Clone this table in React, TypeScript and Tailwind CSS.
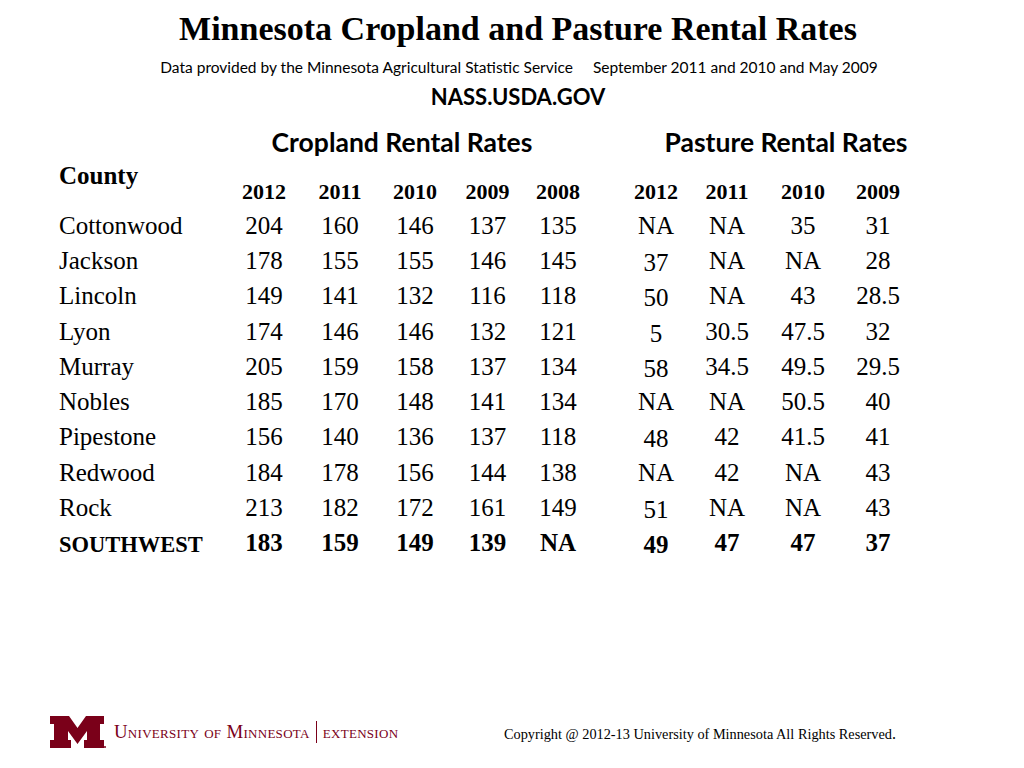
const serif = "font-['Liberation_Serif','Times_New_Roman',serif]";
const sans = "font-['Lato','Open_Sans',sans-serif]";

type Row = { name: string; crop: string[]; pasture: string[]; total?: boolean };

const rows: Row[] = [
  { name: "Cottonwood", crop: ["204", "160", "146", "137", "135"], pasture: ["NA", "NA", "35", "31"] },
  { name: "Jackson", crop: ["178", "155", "155", "146", "145"], pasture: ["37", "NA", "NA", "28"] },
  { name: "Lincoln", crop: ["149", "141", "132", "116", "118"], pasture: ["50", "NA", "43", "28.5"] },
  { name: "Lyon", crop: ["174", "146", "146", "132", "121"], pasture: ["5", "30.5", "47.5", "32"] },
  { name: "Murray", crop: ["205", "159", "158", "137", "134"], pasture: ["58", "34.5", "49.5", "29.5"] },
  { name: "Nobles", crop: ["185", "170", "148", "141", "134"], pasture: ["NA", "NA", "50.5", "40"] },
  { name: "Pipestone", crop: ["156", "140", "136", "137", "118"], pasture: ["48", "42", "41.5", "41"] },
  { name: "Redwood", crop: ["184", "178", "156", "144", "138"], pasture: ["NA", "42", "NA", "43"] },
  { name: "Rock", crop: ["213", "182", "172", "161", "149"], pasture: ["51", "NA", "NA", "43"] },
  { name: "SOUTHWEST", crop: ["183", "159", "149", "139", "NA"], pasture: ["49", "47", "47", "37"], total: true },
];

const grid =
  "grid grid-cols-[167px_76px_76px_74px_71px_70px_27px_72px_70px_82px_68px]";

function BlockM() {
  return (
    <svg width="56" height="32" viewBox="0 0 56 32" className="shrink-0">
      <path
        d="M0 0H19L27.5 12L36 0H54V8H50V24H54V32H34V24H37V15L27.5 28L18 15V24H21V32H0V24H4V8H0Z"
        fill="#7a0019"
      />
      <circle cx="55" cy="31" r="1" fill="#7a0019" />
    </svg>
  );
}

export default function App() {
  return (
    <div className="w-[1024px] h-[768px] bg-white text-black flex flex-col overflow-hidden">
      <h1 className={`${serif} text-[34px] font-bold leading-[42px] mt-[8px] text-center pl-[12px]`}>
        Minnesota Cropland and Pasture Rental Rates
      </h1>
      <p className={`${sans} text-[15.5px] leading-[20px] mt-[7px] text-center pl-[14px]`}>
        Data provided by the Minnesota Agricultural Statistic Service
        <span className="inline-block w-[20px]" />
        September 2011 and 2010 and May 2009
      </p>
      <p className={`${sans} text-[22px] font-bold leading-[26px] mt-[7px] text-center pl-[12px]`}>
        NASS.USDA.GOV
      </p>

      <div className="pl-[59px] mt-[16px]">
        <div className={`${grid} ${sans} text-[26.5px] font-bold leading-[32px]`}>
          <div />
          <div className="col-span-5 text-center pr-[15px]">Cropland Rental Rates</div>
          <div />
          <div className="col-span-4 text-center pl-[40px]">Pasture Rental Rates</div>
        </div>

        <div className={`${grid} ${serif} font-bold h-[50px]`}>
          <div className="text-[25px] leading-[30px] mt-[3px]">County</div>
          {["2012", "2011", "2010", "2009", "2008"].map((y) => (
            <div key={"c" + y} className="text-[22px] leading-[32px] self-end text-center">
              {y}
            </div>
          ))}
          <div />
          {["2012", "2011", "2010", "2009"].map((y) => (
            <div key={"p" + y} className="text-[22px] leading-[32px] self-end text-center">
              {y}
            </div>
          ))}
        </div>

        {rows.map((r) => (
          <div
            key={r.name}
            className={`${grid} ${serif} h-[35.3px] items-center text-[25px] leading-[30px] ${
              r.total ? "font-bold" : ""
            }`}
          >
            <div className={r.total ? "text-[22.5px] pt-[4px]" : ""}>{r.name}</div>
            {r.crop.map((v, i) => (
              <div key={"c" + i} className="text-center">
                {v}
              </div>
            ))}
            <div />
            {r.pasture.map((v, i) => (
              <div
                key={"p" + i}
                className={`text-center ${i === 0 && v !== "NA" ? "pt-[4px]" : ""}`}
              >
                {v}
              </div>
            ))}
          </div>
        ))}
      </div>

      <footer className="mt-auto mb-[20px] flex items-end pl-[50px] pr-[128px]">
        <div className="flex items-center gap-[8px]">
          <BlockM />
          <div
            className={`${serif} text-[#7a0019] text-[18.8px] leading-[20px] [font-variant-caps:small-caps] flex items-center tracking-[0.3px]`}
          >
            <span>University of Minnesota</span>
            <span className="inline-block w-px h-[22px] bg-[#7a0019] mx-[6px]" />
            <span>extension</span>
          </div>
        </div>
        <p className={`${serif} ml-auto text-[14.3px] leading-[16px] pb-[6px]`}>
          Copyright @ 2012-13 University of Minnesota All Rights Reserved<span className="text-[16px]">.</span>
        </p>
      </footer>
    </div>
  );
}
